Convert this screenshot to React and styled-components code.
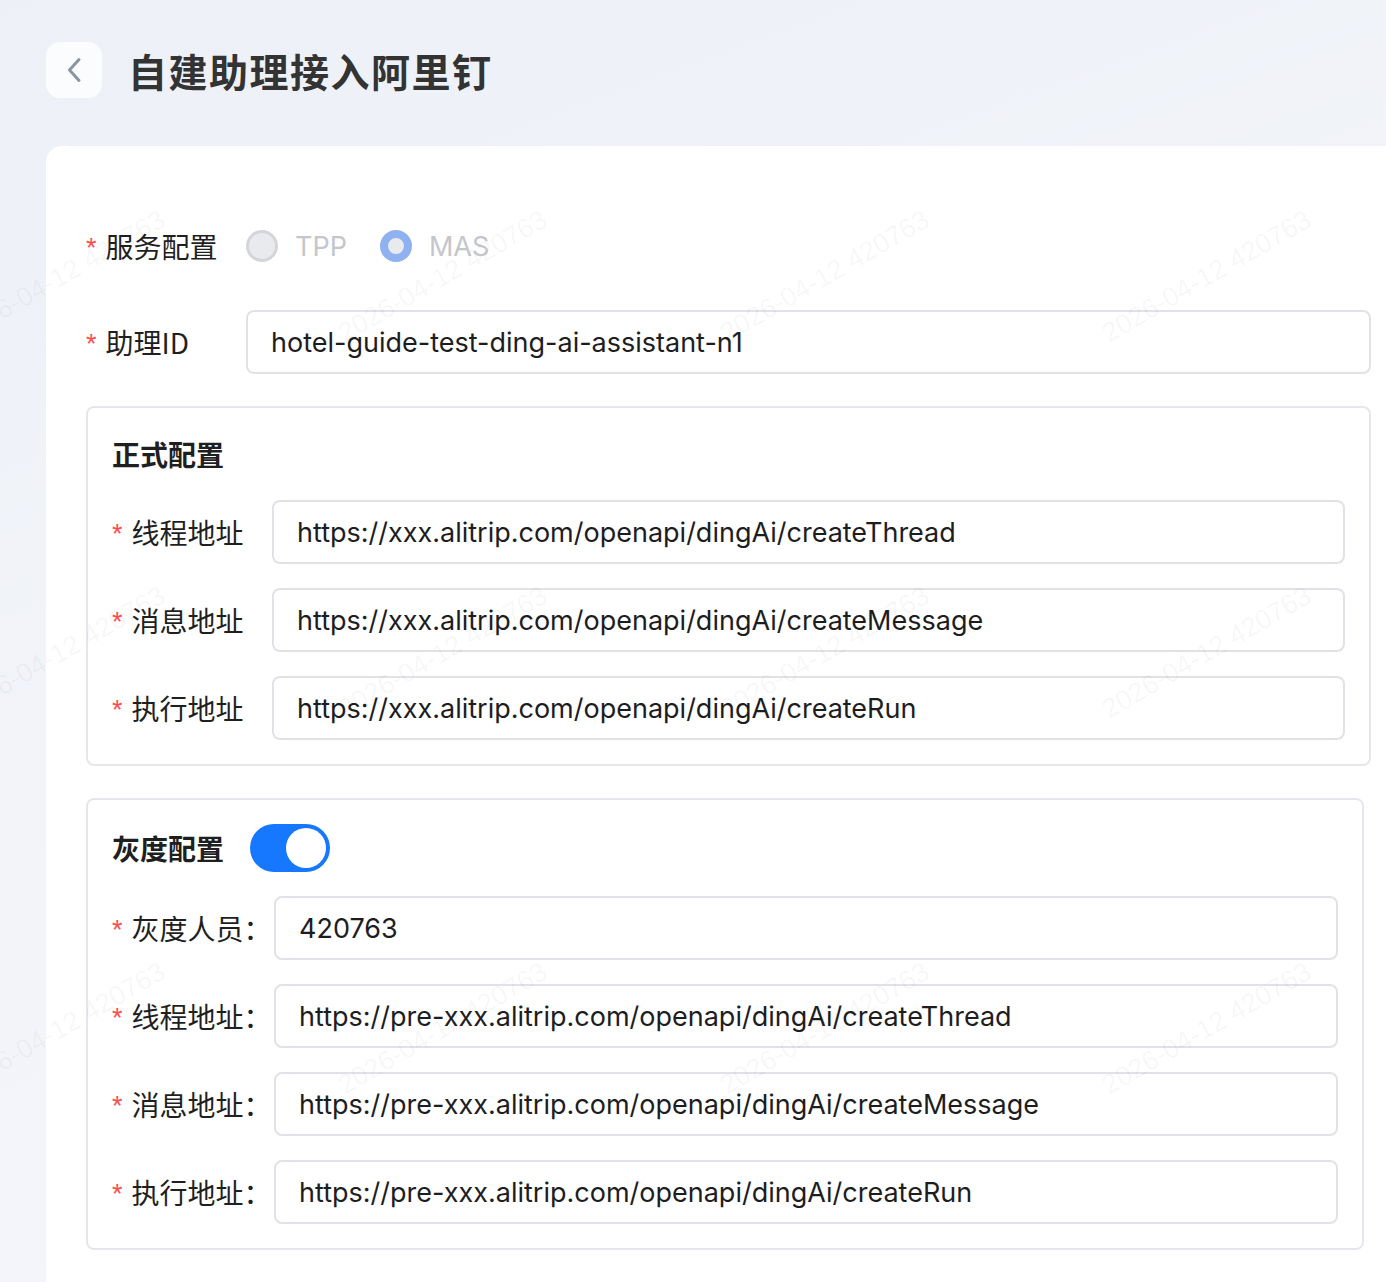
import React from 'react';
import styled, { createGlobalStyle } from 'styled-components';

const GlobalStyle = createGlobalStyle`
  html, body {
    margin: 0;
    padding: 0;
  }
  body {
    background: linear-gradient(160deg, #edf0f7 0%, #f2f4f9 45%, #f4f6fa 100%);
    font-family: Inter, "Noto Sans CJK SC", "Noto Sans", sans-serif;
    color: #1f1f1f;
    overflow: hidden;
  }
`;

const Page = styled.div`
  position: relative;
  min-height: 1282px;
  padding: 42px 0 0 46px;
  box-sizing: border-box;
  overflow: hidden;
`;

const Header = styled.div`
  display: flex;
  align-items: center;
  gap: 26px;
  height: 56px;
`;

const BackButton = styled.button`
  width: 56px;
  height: 56px;
  border: none;
  border-radius: 14px;
  background: #fbfcfe;
  display: flex;
  align-items: center;
  justify-content: center;
  padding: 0;
  cursor: pointer;
`;

const Title = styled.h1`
  margin: 0;
  font-family: "Noto Sans CJK SC", sans-serif;
  font-size: 39px;
  font-weight: 700;
  letter-spacing: 1.5px;
  color: #333;
`;

const Card = styled.div`
  margin-top: 48px;
  background: #fff;
  border-radius: 16px 0 0 0;
  padding: 68px 15px 40px 40px;
  min-height: 1100px;
  box-sizing: border-box;
  display: flex;
  flex-direction: column;
  gap: 32px;
`;

const Row = styled.div`
  display: flex;
  align-items: center;
  height: 64px;
`;

const Label = styled.div`
  width: ${p => p.$width || 160}px;
  flex-shrink: 0;
  display: flex;
  align-items: center;
  font-family: "Noto Sans CJK SC", sans-serif;
  font-size: 28px;
  color: #1f1f1f;
  white-space: nowrap;
`;

const Star = styled.span`
  color: #ff4d4f;
  font-family: "Liberation Sans", sans-serif;
  font-size: 27px;
  line-height: 1;
  margin-right: 9px;
  position: relative;
  top: 2px;
`;

const RadioGroup = styled.div`
  display: flex;
  align-items: center;
  gap: 33px;
`;

const RadioItem = styled.label`
  display: flex;
  align-items: center;
  gap: 17px;
  font-family: Inter, sans-serif;
  font-size: 27px;
  color: #c4c6cb;
`;

const RadioDot = styled.span`
  width: 32px;
  height: 32px;
  box-sizing: border-box;
  border-radius: 50%;
  background: #e9eaed;
  border: ${p => (p.$checked ? '8px solid #8fb1ef' : '3px solid #d3d5da')};
`;

const Input = styled.div`
  flex: 1;
  height: 64px;
  box-sizing: border-box;
  border: 2px solid #e1e2e7;
  border-radius: 8px;
  display: flex;
  align-items: center;
  padding: 0 23px;
  font-family: Inter, "Noto Sans CJK SC", sans-serif;
  font-size: 27px;
  color: #1d1d1f;
  background: rgba(255, 255, 255, 0.6);
  white-space: nowrap;
  overflow: hidden;
`;

const Section = styled.div`
  border: 2px solid #e6e7ec;
  border-radius: 8px;
  padding: 24px;
  margin-right: ${p => p.$mr || 0}px;
  display: flex;
  flex-direction: column;
  gap: 24px;
`;

const SectionHead = styled.div`
  display: flex;
  align-items: center;
  gap: 26px;
  min-height: 44px;
`;

const SectionTitle = styled.div`
  font-family: "Noto Sans CJK SC", sans-serif;
  font-size: 28px;
  font-weight: 700;
  color: #1f1f1f;
  line-height: 44px;
`;

const Switch = styled.span`
  width: 80px;
  height: 48px;
  border-radius: 24px;
  background: #1677ff;
  box-sizing: border-box;
  padding: 4px;
  display: flex;
  justify-content: flex-end;
  &::after {
    content: '';
    width: 40px;
    height: 40px;
    border-radius: 50%;
    background: #fff;
  }
`;

const Watermark = styled.div`
  position: absolute;
  left: -130px;
  top: 88px;
  display: grid;
  grid-template-columns: repeat(5, 382px);
  grid-auto-rows: 376px;
  pointer-events: none;
  z-index: 5;
`;

const Mark = styled.div`
  display: flex;
  align-items: center;
  justify-content: center;
  span {
    transform: rotate(-30deg);
    font-family: "Liberation Sans", sans-serif;
    font-size: 27px;
    color: rgba(0, 0, 0, 0.045);
    white-space: nowrap;
  }
`;

const formal = [
  ['线程地址', 'https://xxx.alitrip.com/openapi/dingAi/createThread'],
  ['消息地址', 'https://xxx.alitrip.com/openapi/dingAi/createMessage'],
  ['执行地址', 'https://xxx.alitrip.com/openapi/dingAi/createRun'],
];

const gray = [
  ['灰度人员：', '420763'],
  ['线程地址：', 'https://pre-xxx.alitrip.com/openapi/dingAi/createThread'],
  ['消息地址：', 'https://pre-xxx.alitrip.com/openapi/dingAi/createMessage'],
  ['执行地址：', 'https://pre-xxx.alitrip.com/openapi/dingAi/createRun'],
];

const App = () => {
  return (
    <Page>
      <GlobalStyle />
      <Header>
        <BackButton aria-label="返回">
          <svg width="28" height="28" viewBox="0 0 28 28" fill="none">
            <path d="M19 3.5L9.5 14l9.5 10.5" stroke="#8b94a4" strokeWidth="3" strokeLinecap="round" strokeLinejoin="round" />
          </svg>
        </BackButton>
        <Title>自建助理接入阿里钉</Title>
      </Header>
      <Card>
        <Row>
          <Label><Star>*</Star>服务配置</Label>
          <RadioGroup>
            <RadioItem><RadioDot />TPP</RadioItem>
            <RadioItem><RadioDot $checked />MAS</RadioItem>
          </RadioGroup>
        </Row>
        <Row>
          <Label><Star>*</Star>助理ID</Label>
          <Input>hotel-guide-test-ding-ai-assistant-n1</Input>
        </Row>
        <Section>
          <SectionHead>
            <SectionTitle>正式配置</SectionTitle>
          </SectionHead>
          {formal.map(([label, value]) => (
            <Row key={label}>
              <Label><Star>*</Star>{label}</Label>
              <Input>{value}</Input>
            </Row>
          ))}
        </Section>
        <Section $mr={7}>
          <SectionHead>
            <SectionTitle>灰度配置</SectionTitle>
            <Switch />
          </SectionHead>
          {gray.map(([label, value]) => (
            <Row key={label + value}>
              <Label $width={162}><Star>*</Star>{label}</Label>
              <Input>{value}</Input>
            </Row>
          ))}
        </Section>
      </Card>
      <Watermark>
        {Array.from({ length: 20 }).map((_, i) => (
          <Mark key={i}><span>2026-04-12 420763</span></Mark>
        ))}
      </Watermark>
    </Page>
  );
};

export default App;
